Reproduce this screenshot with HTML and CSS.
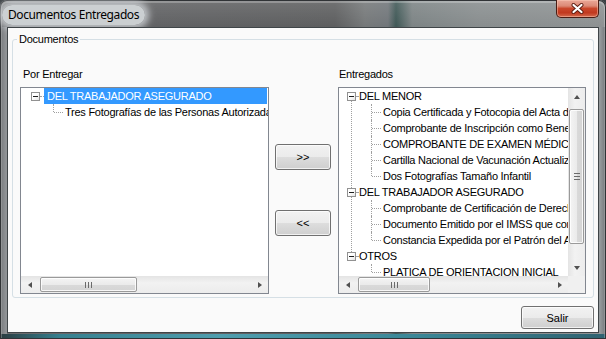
FILE: index.html
```html
<!DOCTYPE html>
<html lang="es">
<head>
    <meta charset="UTF-8">
    <title>Documentos Entregados</title>
    <link rel="stylesheet" href="styles.css">
</head>
<body>
<div class="window">
    <div class="titlebar">
        <span class="title">Documentos Entregados</span>
        <button class="close" title="Cerrar">
            <svg width="13" height="11" viewBox="0 0 13 11">
                <path d="M2.5 2 L10.5 9 M10.5 2 L2.5 9" stroke="#5b1d12" stroke-width="4" stroke-linecap="round"/>
                <path d="M2.5 2 L10.5 9 M10.5 2 L2.5 9" stroke="#ffffff" stroke-width="2.2" stroke-linecap="round"/>
            </svg>
        </button>
    </div>

    <div class="client">
        <fieldset class="group">
            <legend>Documentos</legend>
            <div class="group-body">

                <div class="panel">
                    <span class="caption">Por Entregar</span>
                    <div class="treebox">
                        <ul class="tree tree-left">
                            <li class="node">
                                <div class="row"><span class="exp"></span><span class="text sel">DEL TRABAJADOR ASEGURADO</span></div>
                                <ul>
                                    <li class="leaf"><div class="row"><span class="text">Tres Fotografías de las Personas Autorizadas</span></div></li>
                                </ul>
                            </li>
                        </ul>
                        <div class="hscroll">
                            <span class="arrow arrow-left"></span>
                            <span class="track"><span class="thumb thumb-h thumb-left"><span class="grip-h"></span></span></span>
                            <span class="arrow arrow-right"></span>
                        </div>
                    </div>
                </div>

                <div class="moves">
                    <button class="btn move">&gt;&gt;</button>
                    <button class="btn move">&lt;&lt;</button>
                </div>

                <div class="panel panel-right">
                    <span class="caption">Entregados</span>
                    <div class="treebox treebox-v">
                        <ul class="tree">
                            <li class="node">
                                <div class="row"><span class="exp"></span><span class="text">DEL MENOR</span></div>
                                <ul>
                                    <li class="leaf"><div class="row"><span class="text">Copia Certificada y Fotocopia del Acta de Nacimiento</span></div></li>
                                    <li class="leaf"><div class="row"><span class="text">Comprobante de Inscripción como Beneficiario</span></div></li>
                                    <li class="leaf"><div class="row"><span class="text">COMPROBANTE DE EXAMEN MÉDICO</span></div></li>
                                    <li class="leaf"><div class="row"><span class="text">Cartilla Nacional de Vacunación Actualizada</span></div></li>
                                    <li class="leaf"><div class="row"><span class="text">Dos Fotografías Tamaño Infantil</span></div></li>
                                </ul>
                            </li>
                            <li class="node">
                                <div class="row"><span class="exp"></span><span class="text">DEL TRABAJADOR ASEGURADO</span></div>
                                <ul>
                                    <li class="leaf"><div class="row"><span class="text">Comprobante de Certificación de Derechos</span></div></li>
                                    <li class="leaf"><div class="row"><span class="text">Documento Emitido por el IMSS que contenga</span></div></li>
                                    <li class="leaf"><div class="row"><span class="text">Constancia Expedida por el Patrón del Asegurado</span></div></li>
                                </ul>
                            </li>
                            <li class="node">
                                <div class="row"><span class="exp"></span><span class="text">OTROS</span></div>
                                <ul>
                                    <li class="leaf"><div class="row"><span class="text">PLATICA DE ORIENTACION INICIAL</span></div></li>
                                </ul>
                            </li>
                        </ul>
                        <div class="vscroll">
                            <span class="arrow arrow-up"></span>
                            <span class="track"><span class="thumb thumb-v"><span class="grip-v"></span></span></span>
                            <span class="arrow arrow-down"></span>
                        </div>
                        <div class="hscroll">
                            <span class="arrow arrow-left"></span>
                            <span class="track"><span class="thumb thumb-h thumb-right"><span class="grip-h"></span></span></span>
                            <span class="arrow arrow-right"></span>
                        </div>
                        <div class="corner"></div>
                    </div>
                </div>

            </div>
        </fieldset>

        <div class="footer">
            <button class="btn salir">Salir</button>
        </div>
    </div>
</div>
</body>
</html>
```

FILE: styles.css
```css
* {
    box-sizing: border-box;
}
html, body {
    margin: 0;
    padding: 0;
}
body {
    width: 606px;
    height: 339px;
    overflow: hidden;
    background: #3a3f43;
    font-family: "Liberation Sans", Arial, sans-serif;
    font-size: 11px;
    letter-spacing: -0.25px;
    color: #000;
}

/* window frame (vista glass) */
.window {
    width: 606px;
    height: 339px;
    display: flex;
    flex-direction: column;
    border-radius: 7px 7px 0 0;
    box-shadow: inset 0 0 0 1px #303336, inset 0 1px 0 2px rgba(255, 255, 255, 0.25);
    background:
        linear-gradient(to right, #2b3c40 0, #36808f 60px, #4f9eae 220px, #3a8696 420px, #2f6270 606px) left bottom / 100% 5px no-repeat,
        linear-gradient(to right, #3b3e40 0, #7e8184 2px, #909396 6px) left 27px / 7px 100% no-repeat,
        linear-gradient(to left, #3b3e40 0, #7e8184 2px, #959a9c 6px) right 27px / 7px 100% no-repeat,
        linear-gradient(rgba(255, 255, 255, 0.12), rgba(255, 255, 255, 0) 26px),
        linear-gradient(to right, #6a6c6e 0, #616264 150px, #5e5f60 335px, #76797a 365px, #71767a 388px, #3f5856 396px, #7d8485 412px, #898e8f 480px, #8e9293 606px);
}
.titlebar {
    height: 27px;
    display: flex;
    align-items: flex-start;
    flex: none;
}
.title {
    margin: 5px 0 0 2px;
    padding: 2px 6px;
    font-family: "Noto Sans", "Open Sans", sans-serif;
    font-size: 12px;
    letter-spacing: -0.4px;
    line-height: 16px;
    border-radius: 10px;
    background: rgba(214, 218, 221, 0.9);
    box-shadow: 0 0 7px 4px rgba(214, 218, 221, 0.8);
}
.close {
    margin: 0 7px 0 auto;
    width: 43px;
    height: 18px;
    padding: 0;
    border: 1px solid #4a1d14;
    border-top: none;
    border-radius: 0 0 5px 5px;
    background: linear-gradient(#eaa898 0, #dc8a76 35%, #c9472b 50%, #c1391f 75%, #d46a4f 100%);
    box-shadow: inset 0 0 0 1px rgba(255, 210, 190, 0.45);
    display: flex;
    align-items: center;
    justify-content: center;
}

.client {
    flex: 1;
    margin: 0 7px 6px;
    border: 1px solid #3f4548;
    background: #fafafa;
    display: flex;
    flex-direction: column;
    padding: 5px 4px 0;
}

/* group box */
.group {
    margin: 0;
    padding: 22px 7px 3px;
    border: 1px solid #d5dfe5;
    border-radius: 3px;
    min-width: 0;
}
.group legend {
    margin-left: -3px;
    padding: 0 2px;
    line-height: 13px;
}
.group-body {
    display: grid;
    grid-template-columns: 249px 1fr 248px;
}
.panel {
    display: flex;
    flex-direction: column;
}
.caption {
    line-height: 13px;
    margin-left: 3px;
}
.panel-right .caption {
    margin-left: 1px;
}

/* tree views */
.treebox {
    margin-top: 6px;
    height: 207px;
    border: 1px solid #828790;
    background: #fff;
    display: grid;
    grid-template-columns: minmax(0, 1fr);
    grid-template-rows: minmax(0, 1fr) 17px;
    overflow: hidden;
}
.treebox-v {
    grid-template-columns: minmax(0, 1fr) 17px;
}
.tree, .tree ul {
    list-style: none;
    margin: 0;
    padding: 0;
}
.tree {
    overflow: hidden;
    min-width: 0;
    min-height: 0;
}
.tree li {
    position: relative;
}
.row {
    height: 16px;
    display: flex;
    align-items: center;
    position: relative;
    white-space: nowrap;
}
.text {
    line-height: 16px;
    padding: 0 2px;
}
.sel {
    flex: 1;
    margin-right: 1px;
    background: #3399ff;
    color: #fff;
}
.node > .row {
    padding-left: 8px;
}
.exp {
    flex: none;
    position: relative;
    width: 9px;
    height: 9px;
    border: 1px solid #919191;
    background: linear-gradient(135deg, #fff 40%, #e4e4e4);
}
.exp::before {
    content: "";
    position: absolute;
    left: 1px;
    top: 3px;
    width: 5px;
    height: 1px;
    background: #1e1e1e;
}
.exp + .text {
    margin-left: 1px;
}
.node > .row::after {
    content: "";
    position: absolute;
    left: 17px;
    top: 8px;
    width: 2px;
    border-top: 1px dotted #a0a0a0;
}
.node:not(:last-child)::before {
    content: "";
    position: absolute;
    left: 12px;
    top: 13px;
    bottom: -4px;
    border-left: 1px dotted #a0a0a0;
}
.leaf > .row {
    padding-left: 42px;
}
.leaf::before {
    content: "";
    position: absolute;
    left: 32px;
    top: 0;
    height: 16px;
    border-left: 1px dotted #a0a0a0;
}
.leaf:last-child::before {
    height: 8px;
}
.leaf::after {
    content: "";
    position: absolute;
    left: 33px;
    top: 8px;
    width: 9px;
    border-top: 1px dotted #a0a0a0;
}

/* left tree sits two pixels further in */
.tree-left .node > .row {
    padding-left: 10px;
}
.tree-left .exp + .text {
    margin-left: 4px;
    padding-left: 3px;
}
.tree-left .node > .row::after {
    left: 19px;
    width: 4px;
}

/* scrollbars */
.hscroll, .vscroll {
    display: flex;
    min-height: 0;
    background: linear-gradient(#e4e4e4, #f2f2f2 40%, #ececec);
}
.vscroll {
    flex-direction: column;
    background: linear-gradient(to right, #e4e4e4, #f2f2f2 40%, #ececec);
}
.hscroll {
    grid-column: 1;
}
.track {
    flex: 1;
    display: flex;
    min-height: 0;
}
.vscroll .track {
    flex-direction: column;
}
.arrow {
    flex: none;
    width: 17px;
    height: 17px;
    display: flex;
    align-items: center;
    justify-content: center;
}
.arrow::before {
    content: "";
    width: 0;
    height: 0;
    border: 3px solid transparent;
}
.arrow-left::before {
    border-right: 4px solid #505050;
    border-left: none;
}
.arrow-right::before {
    border-left: 4px solid #505050;
    border-right: none;
}
.arrow-up::before {
    border-bottom: 4px solid #505050;
    border-top: none;
}
.arrow-down::before {
    border-top: 4px solid #505050;
    border-bottom: none;
}
.thumb {
    display: flex;
    align-items: center;
    justify-content: center;
    border: 1px solid #9a9a9a;
    border-radius: 2px;
    box-shadow: inset 0 0 0 1px rgba(255, 255, 255, 0.8);
}
.thumb-h {
    margin: 1px 0 1px 2px;
    background: linear-gradient(#f4f4f4, #ebebeb 50%, #dadada 51%, #d4d4d4);
}
.thumb-left {
    width: 97px;
}
.thumb-right {
    width: 72px;
}
.thumb-v {
    margin: 4px 1px 0;
    height: 135px;
    background: linear-gradient(to right, #f4f4f4, #ebebeb 50%, #dadada 51%, #d4d4d4);
}
.grip-h {
    width: 7px;
    height: 6px;
    background: repeating-linear-gradient(to right, #6b6b6b 0 1px, transparent 1px 3px);
}
.grip-v {
    width: 6px;
    height: 7px;
    background: repeating-linear-gradient(#6b6b6b 0 1px, transparent 1px 3px);
}
.corner {
    background: #f0f0f0;
}

/* buttons */
.btn {
    font-family: "Liberation Sans", Arial, sans-serif;
    font-size: 11px;
    color: #000;
    padding: 0;
    border: 1px solid #707070;
    border-radius: 3px;
    background: linear-gradient(#f2f2f2 0, #ebebeb 50%, #dddddd 51%, #cfcfcf 100%);
    box-shadow: inset 0 0 0 1px rgba(255, 255, 255, 0.7);
}
.moves {
    display: flex;
    flex-direction: column;
    align-items: flex-start;
    padding: 76px 0 0 6px;
    gap: 40px;
}
.move {
    width: 56px;
    height: 26px;
}
.footer {
    display: flex;
    justify-content: flex-end;
    padding-top: 8px;
}
.salir {
    width: 73px;
    height: 23px;
}
```
